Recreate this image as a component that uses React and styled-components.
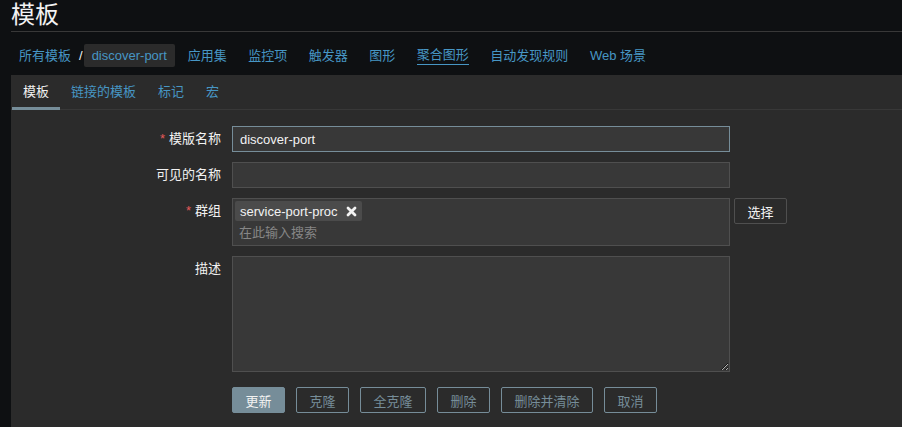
import React from 'react'
import styled, { createGlobalStyle } from 'styled-components'

const GlobalStyle = createGlobalStyle`
  html, body {
    margin: 0;
    padding: 0;
    height: 100%;
    overflow: hidden;
    background: #0e1012;
    color: #f2f2f2;
    font-family: "Liberation Sans", "Noto Sans CJK SC", sans-serif;
    font-size: 13px;
  }
`

const Page = styled.div`
  height: 427px;
  display: flex;
  flex-direction: column;
  padding-left: 11px;
`

const Header = styled.header`
  box-sizing: border-box;
  height: 32px;
  padding-top: 1px;
  border-bottom: 1px solid #383838;
`

const Title = styled.h1`
  margin: 0;
  font-family: "Noto Sans CJK SC", sans-serif;
  font-size: 24px;
  font-weight: normal;
  line-height: 24px;
  color: #f2f2f2;
`

const Nav = styled.nav`
  display: flex;
  align-items: center;
  padding: 12px 0 8px 8px;
  line-height: 23px;
`

const NavLink = styled.a`
  color: #4796c4;
  text-decoration: none;
  white-space: nowrap;
  ${p => p.$underline && `
    border-bottom: 1px solid #4796c4;
    line-height: 18px;
  `}
`

const Separator = styled.span`
  color: #f2f2f2;
  margin: 0 1px 0 8px;
`

const CurrentCrumb = styled.span`
  background: #2b2b2b;
  color: #4796c4;
  padding: 0 8px;
  border-radius: 2px;
  height: 23px;
`

const NavLinks = styled.div`
  display: flex;
  align-items: center;
  gap: 21.5px;
  margin-left: 13px;
`

const Panel = styled.main`
  flex: 1;
  background: #2b2b2b;
`

const TabBar = styled.div`
  display: flex;
  padding-left: 1px;
  border-bottom: 1px solid #383838;
`

const Tab = styled.a`
  padding: 2px 11px 0;
  line-height: 30px;
  margin-bottom: -1px;
  border-bottom: 3px solid ${p => (p.$active ? '#768d99' : 'transparent')};
  color: ${p => (p.$active ? '#f2f2f2' : '#4796c4')};
  text-decoration: none;
`

const Form = styled.form`
  padding-top: 16px;
`

const Row = styled.div`
  display: flex;
  align-items: flex-start;
  margin-bottom: 10px;
`

const Label = styled.label`
  width: 210px;
  margin-right: 11px;
  text-align: right;
  line-height: 26px;
  color: #f2f2f2;
`

const Star = styled.span`
  color: #e45959;
  margin-right: 4px;
`

const TextInput = styled.input`
  box-sizing: border-box;
  width: 498px;
  height: 26px;
  padding: 0 7px;
  background: #383838;
  border: 1px solid ${p => (p.$focused ? '#768d99' : '#4f4f4f')};
  color: #f2f2f2;
  font: 13px "Liberation Sans", "Noto Sans CJK SC", sans-serif;
  outline: none;
  caret-color: #f2f2f2;
`

const MultiSelect = styled.div`
  box-sizing: border-box;
  width: 498px;
  height: 48px;
  padding: 2px;
  background: #383838;
  border: 1px solid #4f4f4f;
`

const Tags = styled.div`
  display: flex;
`

const Tag = styled.span`
  display: inline-flex;
  align-items: center;
  height: 20px;
  padding: 0 5px;
  border-radius: 2px;
  background: #4b4b4b;
  color: #f2f2f2;
`

const TagRemove = styled.svg`
  margin-left: 8px;
  width: 11px;
  height: 11px;
`

const SearchInput = styled.input`
  box-sizing: border-box;
  width: 100%;
  height: 22px;
  padding: 0 4px;
  background: transparent;
  border: none;
  color: #f2f2f2;
  font: 13px "Liberation Sans", "Noto Sans CJK SC", sans-serif;
  outline: none;

  &::placeholder {
    color: #868686;
  }
`

const TextArea = styled.textarea`
  box-sizing: border-box;
  width: 498px;
  height: 116px;
  padding: 4px 7px;
  background: #383838;
  border: 1px solid #4f4f4f;
  color: #f2f2f2;
  color-scheme: dark;
  font: 13px "Liberation Sans", "Noto Sans CJK SC", sans-serif;
  outline: none;
  resize: both;
`

const Button = styled.button`
  box-sizing: border-box;
  height: 26px;
  padding: 0 12.5px;
  border-radius: 2px;
  font: 13px "Liberation Sans", "Noto Sans CJK SC", sans-serif;
  cursor: pointer;
  border: 1px solid ${p => (p.$variant === 'grey' ? '#4f4f4f' : '#768d99')};
  background: ${p => (p.$variant === 'primary' ? '#768d99' : 'transparent')};
  color: ${p => (p.$variant === 'alt' ? '#768d99' : '#f2f2f2')};
`

const SideButton = styled(Button)`
  margin-left: 4px;
`

const Actions = styled.div`
  display: flex;
  gap: 11px;
  padding-left: 221px;
  margin-top: 15px;
`

const navItems = ['应用集', '监控项', '触发器', '图形', '聚合图形', '自动发现规则', 'Web 场景']
const tabs = ['模板', '链接的模板', '标记', '宏']
const actions = ['克隆', '全克隆', '删除', '删除并清除', '取消']

export default function App() {
  return (
    <>
      <GlobalStyle />
      <Page>
        <Header>
          <Title>模板</Title>
        </Header>
        <Nav>
          <NavLink href="#">所有模板</NavLink>
          <Separator>/</Separator>
          <CurrentCrumb>discover-port</CurrentCrumb>
          <NavLinks>
            {navItems.map(item => (
              <NavLink key={item} href="#" $underline={item === '聚合图形'}>{item}</NavLink>
            ))}
          </NavLinks>
        </Nav>
        <Panel>
          <TabBar>
            {tabs.map((t, i) => (
              <Tab key={t} href="#" $active={i === 0}>{t}</Tab>
            ))}
          </TabBar>
          <Form onSubmit={e => e.preventDefault()}>
            <Row>
              <Label><Star>*</Star>模版名称</Label>
              <TextInput
                $focused
                autoFocus
                defaultValue="discover-port"
                onFocus={e => e.target.setSelectionRange(0, 0)}
              />
            </Row>
            <Row>
              <Label>可见的名称</Label>
              <TextInput />
            </Row>
            <Row>
              <Label><Star>*</Star>群组</Label>
              <MultiSelect>
                <Tags>
                  <Tag>
                    service-port-proc
                    <TagRemove viewBox="0 0 11 11">
                      <path d="M2 2 L9 9 M9 2 L2 9" stroke="#f2f2f2" strokeWidth="2.8" strokeLinecap="round" />
                    </TagRemove>
                  </Tag>
                </Tags>
                <SearchInput placeholder="在此输入搜索" />
              </MultiSelect>
              <SideButton type="button" $variant="grey">选择</SideButton>
            </Row>
            <Row>
              <Label>描述</Label>
              <TextArea />
            </Row>
            <Actions>
              <Button type="submit" $variant="primary">更新</Button>
              {actions.map(a => (
                <Button key={a} type="button" $variant="alt">{a}</Button>
              ))}
            </Actions>
          </Form>
        </Panel>
      </Page>
    </>
  )
}
